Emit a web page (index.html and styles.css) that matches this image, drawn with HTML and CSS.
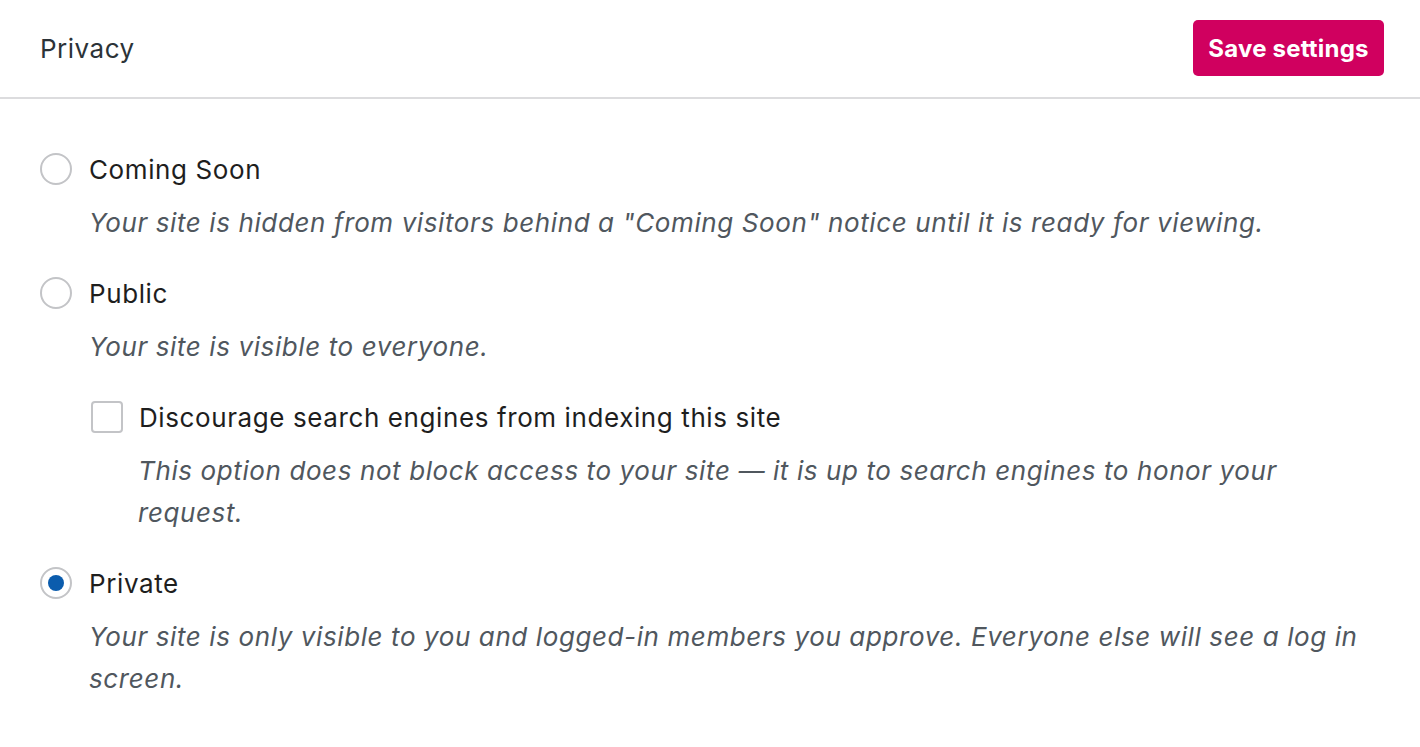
FILE: index.html
```html
<!DOCTYPE html>
<html>
<head>
<meta charset="utf-8">
<link rel="stylesheet" href="styles.css">
</head>
<body>
<header class="header">
  <div class="title">Privacy</div>
  <button class="save">Save settings</button>
</header>
<main class="content">
  <div class="option">
    <label class="row"><span class="radio"></span><span class="label">Coming Soon</span></label>
    <p class="desc">Your site is hidden from visitors behind a "Coming Soon" notice until it is ready for viewing.</p>
  </div>
  <div class="option">
    <label class="row"><span class="radio"></span><span class="label">Public</span></label>
    <p class="desc">Your site is visible to everyone.</p>
    <div class="sub">
      <label class="row"><span class="checkbox"></span><span class="label">Discourage search engines from indexing this site</span></label>
      <p class="desc">This option does not block access to your site — it is up to search engines to honor your request.</p>
    </div>
  </div>
  <div class="option">
    <label class="row"><span class="radio checked"></span><span class="label">Private</span></label>
    <p class="desc">Your site is only visible to you and logged-in members you approve. Everyone else will see a log in screen.</p>
  </div>
</main>
</body>
</html>
```
FILE: styles.css
```css
* { box-sizing: border-box; }
html, body { margin: 0; padding: 0; background: #fff; }
body {
  font-family: Inter, "Noto Sans", sans-serif;
  color: #1e1e1e;
  width: 1420px;
}
.header {
  height: 99px;
  border-bottom: 2px solid #dcdcde;
  display: flex;
  align-items: center;
  justify-content: space-between;
  padding: 0 36px 1px 40px;
}
.title {
  font-size: 26px;
  color: #2c3338;
  letter-spacing: 0.5px;
}
.save {
  font-family: Inter, sans-serif;
  background: #d0005f;
  color: #fff;
  border: none;
  border-radius: 5px;
  height: 56px;
  width: 191px;
  font-size: 24px;
  font-weight: 700;
  padding: 0;
  letter-spacing: 0.2px;
}
.content {
  padding: 52px 40px 0 40px;
}
.option { margin-bottom: 31px; }
.row {
  display: flex;
  align-items: center;
  gap: 17px;
  height: 36px;
}
.label {
  font-size: 26px;
  color: #1e1e1e;
  letter-spacing: 0.6px;
}
.radio {
  width: 32px;
  height: 32px;
  border: 2px solid #c3c4c7;
  border-radius: 50%;
  display: flex;
  align-items: center;
  justify-content: center;
  flex: none;
}
.radio.checked::after {
  content: "";
  width: 16px;
  height: 16px;
  border-radius: 50%;
  background: #0b5cad;
}
.checkbox {
  width: 32px;
  height: 32px;
  border: 2px solid #c3c4c7;
  border-radius: 4px;
  flex: none;
}
.desc {
  margin: 15px 0 0 49px;
  font-size: 26px;
  line-height: 42px;
  font-style: italic;
  color: #50575e;
  letter-spacing: 0.6px;
  max-width: 1290px;
}
.sub {
  margin: 31px 0 0 51px;
}
.sub .row { gap: 16px; }
.sub .desc { margin-left: 47px; max-width: 1180px; }
```
